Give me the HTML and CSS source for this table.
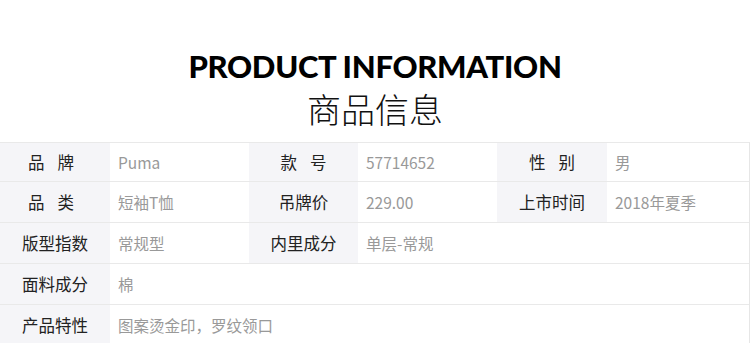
FILE: index.html
```html
<!DOCTYPE html>
<html lang="zh-CN">
<head>
<meta charset="utf-8">
<link rel="stylesheet" href="styles.css">
</head>
<body>
<header class="head">
  <h1 class="title-en">PRODUCT INFORMATION</h1>
  <h2 class="title-cn">商品信息</h2>
</header>
<section class="info">
  <div class="row">
    <div class="lab lab-shift">品<span class="sp"></span>牌</div><div class="val">Puma</div>
    <div class="lab">款<span class="sp"></span>号</div><div class="val">57714652</div>
    <div class="lab">性<span class="sp"></span>别</div><div class="val">男</div>
  </div>
  <div class="row">
    <div class="lab lab-shift">品<span class="sp"></span>类</div><div class="val">短袖T恤</div>
    <div class="lab">吊牌价</div><div class="val">229.00</div>
    <div class="lab">上市时间</div><div class="val">2018年夏季</div>
  </div>
  <div class="row">
    <div class="lab">版型指数</div><div class="val">常规型</div>
    <div class="lab">内里成分</div><div class="val">单层-常规</div>
    <div class="val span2"></div>
  </div>
  <div class="row">
    <div class="lab">面料成分</div><div class="val span5">棉</div>
  </div>
  <div class="row">
    <div class="lab">产品特性</div><div class="val span5">图案烫金印，罗纹领口</div>
  </div>
</section>
</body>
</html>
```
FILE: styles.css
```css
html, body {
  margin: 0;
  padding: 0;
  background: #fff;
}
body {
  width: 750px;
  font-family: "Noto Sans CJK SC", "Noto Sans", sans-serif;
}
.head {
  display: flex;
  flex-direction: column;
  align-items: center;
  gap: 10px;
  padding-top: 51px;
  height: 91px;
}
.title-en {
  margin: 0;
  font-family: Lato, "Liberation Sans", sans-serif;
  font-weight: 900;
  font-size: 31px;
  line-height: 31px;
  letter-spacing: -0.3px;
  color: #000;
}
.title-cn {
  margin: 0;
  font-family: "Noto Sans CJK SC", sans-serif;
  font-weight: 300;
  font-size: 34px;
  line-height: 34px;
  color: #111;
}
.info {
  width: 749px;
  border-top: 1px solid #e9e9e9;
  border-right: 1px solid #e6e6e6;
}
.row {
  display: grid;
  grid-template-columns: 110px 139px 109px 139px 110px 142px;
  height: 40px;
  border-bottom: 1px solid #e9e9e9;
}
.row:first-child {
  height: 38px;
}
.lab {
  background: #f5f5f8;
  display: flex;
  align-items: center;
  justify-content: center;
  font-size: 16.5px;
  color: #222;
}
.lab-shift {
  padding-right: 8px;
}
.sp {
  display: inline-block;
  width: 13px;
}
.val {
  display: flex;
  align-items: center;
  padding-left: 8px;
  font-size: 15.5px;
  color: #999;
}
.span2 { grid-column: span 2; }
.span5 { grid-column: span 5; }
```
